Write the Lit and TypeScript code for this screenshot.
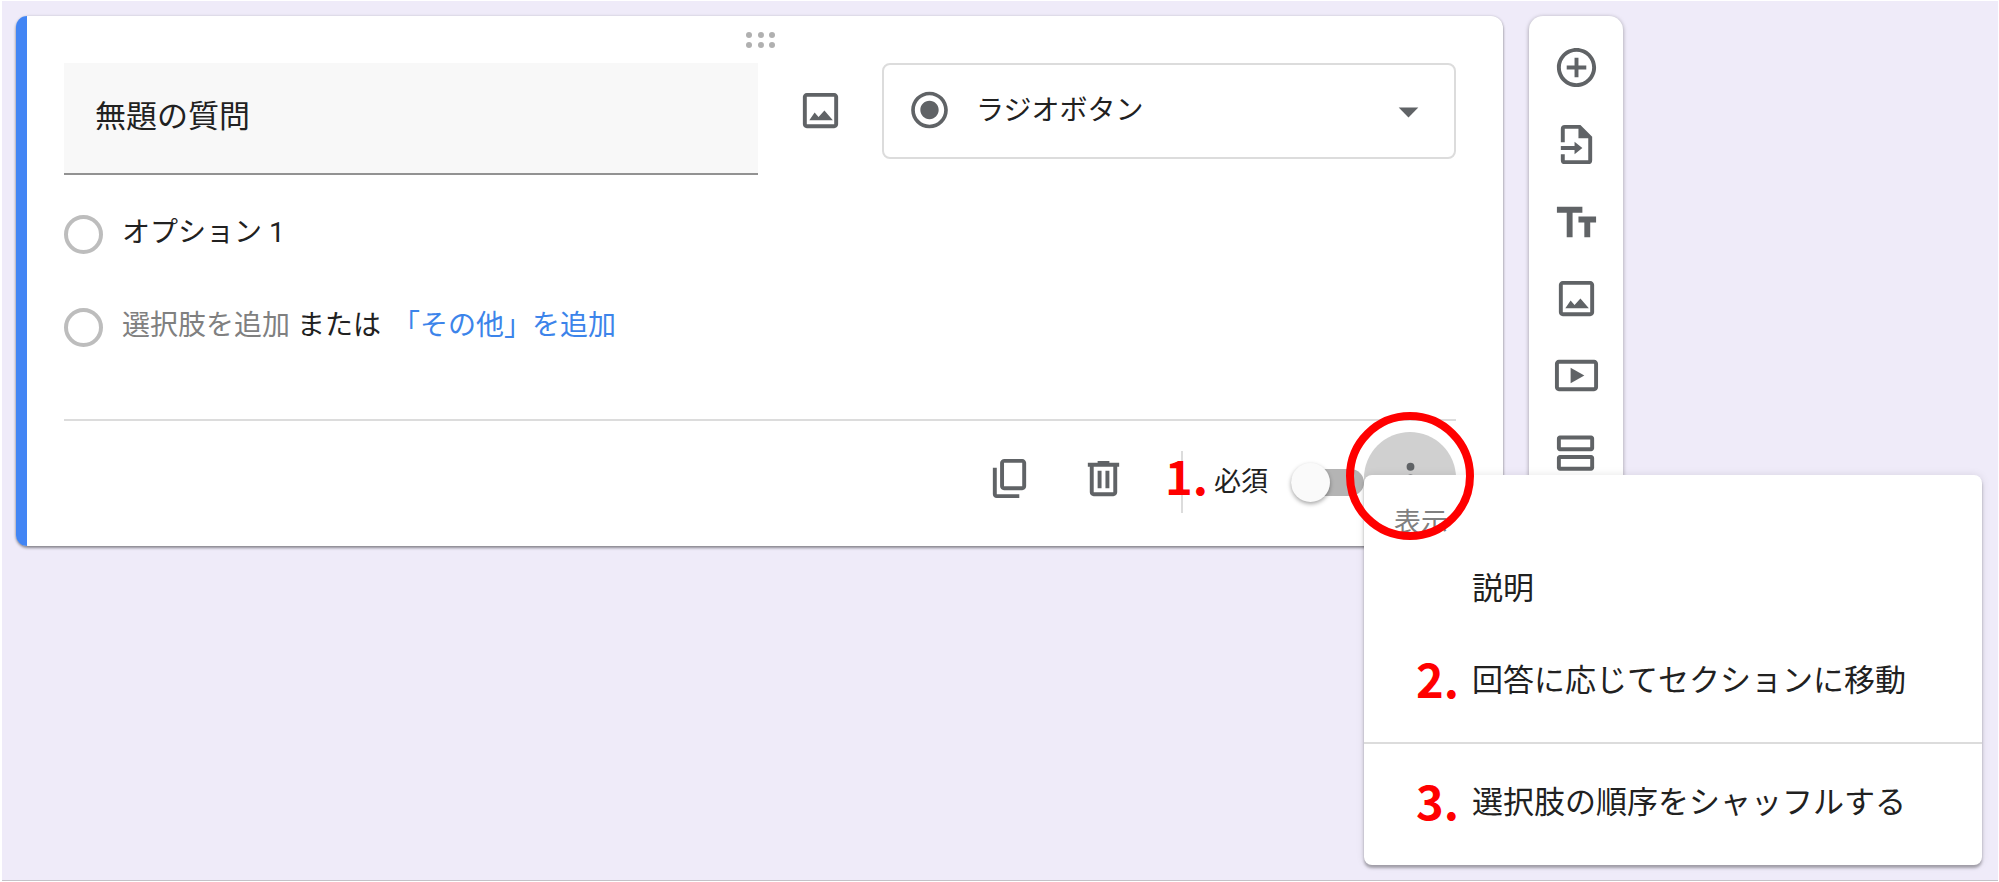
import { LitElement, html, css, svg } from "lit";
import { customElement, property } from "lit/decorators.js";

const ICONS: Record<string, unknown> = {
  add: svg`<path d="M13 7h-2v4H7v2h4v4h2v-4h4v-2h-4V7zm-1-5C6.480 2 2 6.480 2 12s4.480 10 10 10 10-4.480 10-10S17.520 2 12 2zm0 18c-4.410 0-8-3.590-8-8s3.590-8 8-8 8 3.590 8 8-3.590 8-8 8z"/>`,
  import: svg`<path d="M4 10.800V4a2 2 0 0 1 2-2h8l6 6v12a2 2 0 0 1-2 2H6a2 2 0 0 1-2-2v-3h2v3h12V8.800h-5V4H6v6.800z"/><path d="M4 12.800h7v-2.200l4 3.200-4 3.200v-2.200H4z"/>`,
  title: svg`<path d="M2 4.500v3h5v12.500h3V7.500h5v-3H2zm20 5h-9v3h3V20h3v-7.500h3v-3z"/>`,
  image: svg`<path d="M19 5v14H5V5h14m0-2H5c-1.100 0-2 .900-2 2v14c0 1.100.900 2 2 2h14c1.100 0 2-.900 2-2V5c0-1.100-.900-2-2-2z"/><path d="M6.300 17l2.700-4 2 2.300L14 12l4.300 5z"/>`,
  video: svg`<path d="M21 4H3c-1.100 0-2 .900-2 2v12c0 1.100.900 2 2 2h18c1.100 0 2-.900 2-2V6c0-1.100-.900-2-2-2zm0 14H3V6h18v12z"/><path d="M9 8l7 4-7 4z"/>`,
  section: svg`<path d="M19 15.300v4H4v-4h15m.500-2h-16C2.700 13.300 2 14 2 14.800v5c0 .800.700 1.500 1.500 1.500h16c.800 0 1.500-.700 1.500-1.500v-5c0-.800-.700-1.500-1.500-1.500zM19 5.300v4H4v-4h15m.500-2h-16C2.700 3.300 2 4 2 4.800v5c0 .800.700 1.500 1.500 1.500h16c.800 0 1.500-.700 1.500-1.500v-5c0-.800-.700-1.500-1.500-1.500z"/>`,
  copy: svg`<path d="M18.500 2h-9C8.100 2 7.200 2.900 7.200 4v12c0 1.100.900 2 2 2h9.300c1.100 0 2-.900 2-2V4c0-1.100-.900-2-2-2zm0 14H9.200V4h9.300v12zM3.500 6.500V20c0 1.100.900 2 2 2H17v-2H5.500V6.500z"/>`,
  trash: svg`<path d="M15 4V3H9v1H4v2h1v13c0 1.100.900 2 2 2h10c1.100 0 2-.900 2-2V6h1V4h-5zm2 15H7V6h10v13zM9 8h2v9H9zM13 8h2v9h-2z"/>`,
  radio: svg`<path d="M12 7c-2.760 0-5 2.240-5 5s2.240 5 5 5 5-2.240 5-5-2.240-5-5-5zm0-5C6.480 2 2 6.480 2 12s4.480 10 10 10 10-4.480 10-10S17.520 2 12 2zm0 18c-4.420 0-8-3.580-8-8s3.580-8 8-8 8 3.580 8 8-3.580 8-8 8z"/>`,
  caret: svg`<path d="M7 10l5 5 5-5z"/>`,
  more: svg`<circle cx="12" cy="6" r="2"/><circle cx="12" cy="12" r="2"/><circle cx="12" cy="18" r="2"/>`,
};

@customElement("form-icon")
class FormIcon extends LitElement {
  @property() name = "";

  static styles = css`
    :host {
      display: block;
      width: 47px;
      height: 47px;
      color: #606366;
    }
    .glyph {
      display: block;
      width: 100%;
      height: 100%;
      fill: currentColor;
    }
  `;

  render() {
    return html`<svg class="glyph" viewBox="0 0 24 24" aria-hidden="true">${ICONS[this.name]}</svg>`;
  }
}

const shared = css`
  * {
    box-sizing: border-box;
  }
  button,
  input,
  select {
    margin: 0;
    padding: 0;
    border: 0;
    background: none;
    font: inherit;
    color: inherit;
    appearance: none;
  }
  button {
    cursor: pointer;
  }
  .mark {
    padding-bottom: 6px;
    font-family: "Noto Sans CJK JP", sans-serif;
    font-size: 47px;
    line-height: 56px;
    font-weight: 700;
    color: #f00;
  }
`;

@customElement("tool-rail")
class ToolRail extends LitElement {
  static styles = [
    shared,
    css`
      :host {
        display: block;
      }
      .rail {
        display: flex;
        flex-direction: column;
        align-items: center;
        gap: 30px;
        padding: 28px 0;
        background: #fff;
        border-radius: 14px;
        box-shadow: 0 1px 4px rgba(0, 0, 0, 0.35);
      }
    `,
  ];

  private tools = [
    ["add", "質問を追加"],
    ["import", "質問をインポート"],
    ["title", "タイトルと説明を追加"],
    ["image", "画像を追加"],
    ["video", "動画を追加"],
    ["section", "セクションを追加"],
  ];

  render() {
    return html`<nav class="rail">
      ${this.tools.map(
        ([icon, label]) => html`<button aria-label=${label}><form-icon name=${icon}></form-icon></button>`
      )}
    </nav>`;
  }
}

@customElement("overflow-menu")
class OverflowMenu extends LitElement {
  static styles = [
    shared,
    css`
      :host {
        display: block;
        position: relative;
        width: 92px;
        height: 92px;
      }
      .trigger {
        display: grid;
        place-items: center;
        width: 100%;
        height: 100%;
        border-radius: 50%;
        background: #d0d0d0;
      }
      .menu {
        position: absolute;
        z-index: 2;
        top: 43px;
        left: 0;
        width: 618px;
        padding-bottom: 16px;
        border-radius: 8px;
        background: #fff;
        box-shadow: 0 3px 3px rgba(0, 0, 0, 0.3), 0 0 8px rgba(0, 0, 0, 0.1);
      }
      .heading {
        padding: 28px 30px 0;
        font-size: 27px;
        line-height: 40px;
        color: #808080;
      }
      .item {
        display: grid;
        grid-template-columns: 56px 1fr;
        align-items: center;
        width: 100%;
        height: 92px;
        padding-left: 52px;
        text-align: left;
        font-size: 31px;
        line-height: 46px;
      }
      .rule {
        height: 2px;
        margin: 15px 0 13px;
        border: 0;
        background: #dcdcdc;
      }
      .ring {
        position: absolute;
        z-index: 3;
        top: -20px;
        left: -18px;
        width: 128px;
        height: 128px;
        border: 8px solid #f00;
        border-radius: 50%;
        pointer-events: none;
      }
    `,
  ];

  render() {
    return html`
      <button class="trigger" aria-label="その他のオプション"><form-icon name="more"></form-icon></button>
      <div class="menu" role="menu">
        <div class="heading">表示</div>
        <button class="item" role="menuitem"><span></span><span>説明</span></button>
        <button class="item" role="menuitem">
          <span class="mark">2.</span><span>回答に応じてセクションに移動</span>
        </button>
        <hr class="rule" />
        <button class="item" role="menuitem">
          <span class="mark">3.</span><span>選択肢の順序をシャッフルする</span>
        </button>
      </div>
      <div class="ring"></div>
    `;
  }
}

@customElement("question-card")
class QuestionCard extends LitElement {
  static styles = [
    shared,
    css`
      :host {
        display: block;
      }
      .card {
        display: grid;
        grid-template-columns: 11px minmax(0, 1fr);
        grid-template-rows: 47px auto;
        background: #fff;
        border-radius: 12px;
        box-shadow: 0 2px 3px rgba(0, 0, 0, 0.4), 0 0 3px rgba(0, 0, 0, 0.15);
      }
      .accent {
        grid-area: 1 / 1 / 3 / 2;
        background: #4285f4;
        border-radius: 12px 0 0 12px;
      }
      .handle {
        grid-area: 1 / 1 / 2 / 3;
        justify-self: center;
        align-self: center;
        width: 30px;
        height: 16px;
        fill: #b0b0b0;
      }
      .body {
        grid-area: 2 / 2 / 3 / 3;
        padding: 0 47px 22px 37px;
      }
      .question {
        display: grid;
        grid-template-columns: minmax(0, 694fr) 124px minmax(0, 574fr);
        align-items: start;
      }
      .title {
        width: 100%;
        height: 112px;
        padding: 0 31px 10px;
        background: #f8f8f8;
        border-bottom: 2px solid #929292;
        font-size: 31px;
      }
      .picture {
        display: grid;
        place-items: center;
        height: 94px;
      }
      .kind {
        display: grid;
        grid-template-columns: 24px 47px 1fr 47px 24px;
        align-items: center;
        height: 96px;
      }
      .kind-select {
        grid-area: 1 / 1 / 2 / 6;
        width: 100%;
        height: 100%;
        padding: 0 92px 2px;
        border: 2px solid #dcdcdc;
        border-radius: 8px;
        font-size: 28px;
      }
      .kind-icon {
        grid-area: 1 / 2 / 2 / 3;
        padding-bottom: 3px;
        pointer-events: none;
      }
      .kind-caret {
        grid-area: 1 / 4 / 2 / 5;
        pointer-events: none;
      }
      .options {
        padding: 13px 0 45px;
        font-size: 28px;
        line-height: 40px;
      }
      .option {
        display: flex;
        align-items: center;
        height: 93px;
      }
      .dot {
        width: 39px;
        height: 39px;
        margin-right: 19px;
        border: 4px solid #bdbdbd;
        border-radius: 50%;
      }
      .copy {
        padding-bottom: 4px;
      }
      .faint {
        color: #808080;
      }
      .or {
        margin: 0 11px 0 7px;
      }
      .link {
        color: #3c84ea;
      }
      .footer {
        display: flex;
        justify-content: flex-end;
        align-items: center;
        padding-top: 11px;
        border-top: 2px solid #dcdcdc;
      }
      .actions {
        display: flex;
        gap: 47px;
      }
      .divider {
        position: relative;
        width: 2px;
        height: 62px;
        margin: 8px 31px 0 54px;
        background: #dcdcdc;
      }
      .divider .mark {
        position: absolute;
        top: -4px;
        left: -16px;
      }
      .required {
        display: flex;
        align-items: center;
        gap: 23px;
        padding-top: 8px;
        font-size: 27px;
        line-height: 40px;
      }
      .switch {
        display: flex;
        align-items: center;
        width: 73px;
        height: 27px;
        border-radius: 14px;
        background: #b4b4b4;
      }
      .switch::before {
        content: "";
        width: 39px;
        height: 39px;
        flex: none;
        border-radius: 50%;
        background: #fafafa;
        box-shadow: 0 2px 4px rgba(0, 0, 0, 0.35);
      }
    `,
  ];

  render() {
    return html`
      <section class="card">
        <div class="accent"></div>
        <svg class="handle" viewBox="0 0 30 16" aria-hidden="true">
          ${[4, 16, 27].map((x) => [3, 13].map((y) => svg`<circle cx=${x} cy=${y} r="3"/>`))}
        </svg>
        <div class="body">
          <div class="question">
            <input class="title" type="text" aria-label="質問" value="無題の質問" />
            <button class="picture" aria-label="画像を追加"><form-icon name="image"></form-icon></button>
            <div class="kind">
              <select class="kind-select" aria-label="質問の形式">
                <option selected>ラジオボタン</option>
              </select>
              <form-icon class="kind-icon" name="radio"></form-icon>
              <form-icon class="kind-caret" name="caret"></form-icon>
            </div>
          </div>
          <div class="options">
            <div class="option">
              <input class="dot" type="radio" name="answer" id="first" disabled />
              <label class="copy" for="first">オプション 1</label>
            </div>
            <div class="option">
              <input class="dot" type="radio" name="answer" aria-label="選択肢を追加" disabled />
              <button class="copy faint">選択肢を追加</button>
              <span class="copy or">または</span>
              <button class="copy link">「その他」を追加</button>
            </div>
          </div>
          <div class="footer">
            <div class="actions">
              <button aria-label="コピーを作成"><form-icon name="copy"></form-icon></button>
              <button aria-label="削除"><form-icon name="trash"></form-icon></button>
            </div>
            <div class="divider"><span class="mark">1.</span></div>
            <label class="required">必須<input class="switch" type="checkbox" role="switch" /></label>
            <overflow-menu></overflow-menu>
          </div>
        </div>
      </section>
    `;
  }
}

@customElement("app-root")
class AppRoot extends LitElement {
  static styles = css`
    :host {
      display: block;
      background: #fff;
      color: #212121;
      font-family: Roboto, "Noto Sans CJK JP", sans-serif;
    }
    .page {
      box-sizing: border-box;
      display: grid;
      grid-template-columns: minmax(0, 1fr) 94px;
      gap: 26px;
      align-items: start;
      min-height: 100vh;
      padding: 15px 375px 0 14px;
      border: solid #fff;
      border-width: 1px 1px 1px 2px;
      background: #efebf9;
      box-shadow: inset 0 -1px #c4c2c8;
    }
  `;

  render() {
    return html`<main class="page">
      <question-card></question-card>
      <tool-rail></tool-rail>
    </main>`;
  }
}
